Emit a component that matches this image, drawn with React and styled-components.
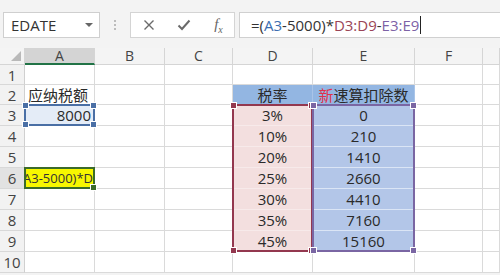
import React from "react";
import styled, { createGlobalStyle } from "styled-components";

const Global = createGlobalStyle`
  html, body { margin: 0; padding: 0; background: #f3f3f3; }
  body { font-family: "Open Sans", "Noto Sans CJK SC", sans-serif; width: 500px; height: 275px; overflow: hidden; }
`;

const Page = styled.div`
  width: 500px;
  height: 275px;
  background: #f3f3f3;
  overflow: hidden;
`;

const TopBar = styled.div`
  display: flex;
  align-items: stretch;
  height: 26px;
  padding: 12px 0 10px 3px;
`;

const NameBox = styled.div`
  width: 97px;
  box-sizing: border-box;
  background: #fff;
  border: 1px solid #cfcfcf;
  display: flex;
  align-items: center;
  justify-content: space-between;
  padding: 0 6px 0 7px;
  font-size: 15px;
  color: #333;
`;

const Caret = styled.span`
  width: 0;
  height: 0;
  border-left: 4px solid transparent;
  border-right: 4px solid transparent;
  border-top: 4px solid #666;
`;

const Sep = styled.div`
  width: 30px;
  display: flex;
  flex-direction: column;
  align-items: center;
  justify-content: center;
  gap: 2px;
`;

const Dot = styled.span`
  width: 2px;
  height: 2px;
  background: #aaa;
  border-radius: 1px;
`;

const Buttons = styled.div`
  width: 105px;
  box-sizing: border-box;
  background: #fff;
  border: 1px solid #d4d4d4;
  display: grid;
  grid-template-columns: 35px 35px 35px;
  align-items: center;
  justify-items: center;
`;

const Fx = styled.span`
  font-family: "Liberation Serif", serif;
  font-style: italic;
  font-size: 15px;
  color: #666;
  sub { font-size: 10px; }
`;

const FormulaBox = styled.div`
  flex: 1;
  margin-left: 4px;
  box-sizing: border-box;
  background: #fff;
  border: 1px solid #d0d0d0;
  border-right: none;
  display: flex;
  align-items: center;
  padding-left: 11px;
  font-size: 15px;
  color: #333;
  white-space: nowrap;
`;

const Ref = styled.span`
  color: ${(p) => p.$c};
`;

const Cursor = styled.span`
  display: inline-block;
  width: 1px;
  height: 18px;
  background: #222;
  margin-left: 1px;
`;

const Sheet = styled.div`
  display: grid;
  grid-template-columns: 25px 70px 70px 68px 80px 102px 68px 1fr;
  grid-template-rows: 17px 20px 20px repeat(8, 21px);
  background: #fff;
`;

const Corner = styled.div`
  grid-column: 1;
  grid-row: 1;
  background: #f4f4f4;
  border-right: 1px solid #d5d5d5;
  border-bottom: 1px solid #d5d5d5;
  box-sizing: border-box;
  display: flex;
  align-items: flex-end;
  justify-content: flex-end;
  padding: 0 3px 3px 0;
`;

const Tri = styled.span`
  width: 0;
  height: 0;
  border-left: 10px solid transparent;
  border-bottom: 10px solid #b9b9b9;
`;

const ColHead = styled.div`
  grid-column: ${(p) => p.$col};
  grid-row: 1;
  box-sizing: border-box;
  background: ${(p) => (p.$active ? "#d4d4d4" : "#f4f4f4")};
  border-right: 1px solid #d5d5d5;
  border-bottom: ${(p) => (p.$active ? "2px solid #217346" : "1px solid #d5d5d5")};
  display: flex;
  align-items: center;
  justify-content: center;
  font-size: 14px;
  color: #444;
  line-height: 1;
`;

const RowHead = styled.div`
  grid-column: 1;
  grid-row: ${(p) => p.$row};
  box-sizing: border-box;
  background: ${(p) => (p.$active ? "#e2e2e2" : "#f2f2f2")};
  border-right: 1px solid #d0d0d0;
  border-bottom: 1px solid #d8d8d8;
  display: flex;
  align-items: center;
  justify-content: center;
  font-size: 15px;
  color: #444;
`;

const Cell = styled.div`
  grid-column: ${(p) => p.$col};
  grid-row: ${(p) => p.$row};
  box-sizing: border-box;
  background: ${(p) => p.$bg || "#fff"};
  border-right: 1px solid ${(p) => p.$line || "#dadada"};
  border-bottom: 1px solid ${(p) => p.$line || "#dadada"};
  display: flex;
  align-items: center;
  justify-content: ${(p) => p.$align || "flex-start"};
  padding: 0 3px;
  font-size: 15px;
  color: #2a2a2a;
  white-space: nowrap;
  overflow: hidden;
`;

const Red = styled.span`
  color: #e0304a;
`;

const EditCell = styled.div`
  grid-column: 2;
  grid-row: 7;
  margin: -1px 0 0 -1px;
  box-sizing: border-box;
  background: #f7f700;
  border: 2px solid #3b6b2a;
  display: flex;
  align-items: center;
  position: relative;
  z-index: 3;
  font-size: 13px;
  color: #333;
  white-space: nowrap;
  min-width: 0;
`;

const Clip = styled.div`
  flex: 1;
  min-width: 0;
  overflow: hidden;
  display: flex;
  justify-content: flex-end;
`;

const EditText = styled.span`
  flex-shrink: 0;
`;

const Range = styled.div`
  grid-column: ${(p) => p.$col};
  grid-row: ${(p) => p.$rows};
  margin: -1px 0 0 -1px;
  border: 2px solid ${(p) => p.$c};
  box-sizing: border-box;
  position: relative;
  z-index: ${(p) => p.$z || 2};
  pointer-events: none;
`;

const Handle = styled.span`
  position: absolute;
  width: 5px;
  height: 5px;
  background: ${(p) => p.$c};
  border: 1px solid #fff;
  ${(p) => (p.$top ? "top: -4px;" : "bottom: -4px;")}
  ${(p) => (p.$left ? "left: -4px;" : "right: -4px;")}
`;

const FillHandle = styled.span`
  position: absolute;
  right: -4px;
  bottom: -4px;
  width: 5px;
  height: 5px;
  background: #3b6b2a;
  border: 1px solid #fff;
`;

function Handles({ c }) {
  return (
    <>
      <Handle $c={c} $top $left />
      <Handle $c={c} $top />
      <Handle $c={c} $left />
      <Handle $c={c} />
    </>
  );
}

const cols = ["A", "B", "C", "D", "E", "F", ""];
const rates = ["3%", "10%", "20%", "25%", "30%", "35%", "45%"];
const deduct = ["0", "210", "1410", "2660", "4410", "7160", "15160"];

export default function App() {
  const cells = [];
  for (let r = 1; r <= 10; r++) {
    for (let c = 2; c <= 8; c++) {
      const key = `${r}-${c}`;
      const gr = r + 1;
      if (r === 2 && c === 2) {
        cells.push(
          <Cell key={key} $col={c} $row={gr}>
            应纳税额
          </Cell>
        );
      } else if (r === 3 && c === 2) {
        cells.push(
          <Cell key={key} $col={c} $row={gr} $bg="#e4ecf7" $align="flex-end">
            8000
          </Cell>
        );
      } else if (r === 2 && c === 5) {
        cells.push(
          <Cell key={key} $col={c} $row={gr} $bg="#93b6e2" $line="#a9c4e8" $align="center">
            税率
          </Cell>
        );
      } else if (r === 2 && c === 6) {
        cells.push(
          <Cell key={key} $col={c} $row={gr} $bg="#93b6e2" $line="#a9c4e8" $align="center">
            <Red>新</Red>速算扣除数
          </Cell>
        );
      } else if (r >= 3 && r <= 9 && c === 5) {
        cells.push(
          <Cell key={key} $col={c} $row={gr} $bg="#f3dfdf" $line="#f7eaea" $align="center">
            {rates[r - 3]}
          </Cell>
        );
      } else if (r >= 3 && r <= 9 && c === 6) {
        cells.push(
          <Cell key={key} $col={c} $row={gr} $bg="#b3c6e8" $line="#dbe5f5" $align="center">
            {deduct[r - 3]}
          </Cell>
        );
      } else {
        cells.push(<Cell key={key} $col={c} $row={gr} />);
      }
    }
  }

  return (
    <Page>
      <Global />
      <TopBar>
        <NameBox>
          EDATE
          <Caret />
        </NameBox>
        <Sep>
          <Dot />
          <Dot />
          <Dot />
        </Sep>
        <Buttons>
          <svg width="12" height="12" viewBox="0 0 12 12">
            <path d="M1.5 1.5 L10.5 10.5 M10.5 1.5 L1.5 10.5" stroke="#6a6a6a" strokeWidth="1.4" fill="none" />
          </svg>
          <svg width="14" height="12" viewBox="0 0 14 12">
            <path d="M1.5 6.5 L5 10 L12.5 1.5" stroke="#6a6a6a" strokeWidth="2" fill="none" />
          </svg>
          <Fx>
            f<sub>x</sub>
          </Fx>
        </Buttons>
        <FormulaBox>
          =(<Ref $c="#3c6eb0">A3</Ref>-5000)*<Ref $c="#9a4456">D3:D9</Ref>-<Ref $c="#7d62a6">E3:E9</Ref>
          <Cursor />
        </FormulaBox>
      </TopBar>
      <Sheet>
        <Corner>
          <Tri />
        </Corner>
        {cols.map((c, i) => (
          <ColHead key={i} $col={i + 2} $active={c === "A"}>
            {c}
          </ColHead>
        ))}
        {Array.from({ length: 10 }, (_, i) => (
          <RowHead key={i} $row={i + 2} $active={i === 5}>
            {i + 1}
          </RowHead>
        ))}
        {cells}
        <Range $col="2" $rows="4" $c="#4a6fa5">
          <Handles c="#4a6fa5" />
        </Range>
        <Range $col="5" $rows="4 / 11" $c="#93384f">
          <Handles c="#93384f" />
        </Range>
        <Range $col="6" $rows="4 / 11" $c="#7a66a3" $z={3}>
          <Handles c="#7a66a3" />
        </Range>
        <EditCell>
          <Clip>
            <EditText>=(A3-5000)*D</EditText>
          </Clip>
          <FillHandle />
        </EditCell>
      </Sheet>
    </Page>
  );
}
